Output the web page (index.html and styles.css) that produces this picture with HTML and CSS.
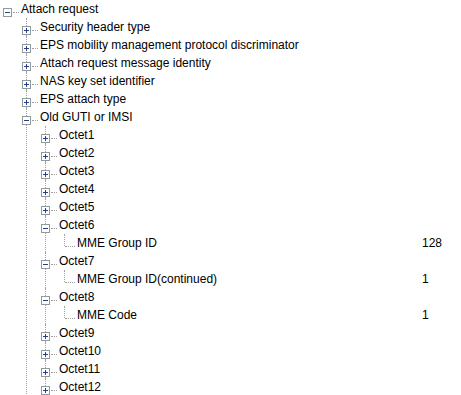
FILE: index.html
```html
<!DOCTYPE html>
<html>
<head>
<meta charset="utf-8">
<link rel="stylesheet" href="styles.css">
</head>
<body>
<ul class="tree">
  <li class="root">
    <div class="row"><span class="tog minus"></span><span class="conn"></span><span class="label">Attach request</span></div>
    <ul>
      <li><div class="row"><span class="tog plus"></span><span class="conn"></span><span class="label">Security header type</span></div></li>
      <li><div class="row"><span class="tog plus"></span><span class="conn"></span><span class="label">EPS mobility management protocol discriminator</span></div></li>
      <li><div class="row"><span class="tog plus"></span><span class="conn"></span><span class="label">Attach request message identity</span></div></li>
      <li><div class="row"><span class="tog plus"></span><span class="conn"></span><span class="label">NAS key set identifier</span></div></li>
      <li><div class="row"><span class="tog plus"></span><span class="conn"></span><span class="label">EPS attach type</span></div></li>
      <li>
        <div class="row"><span class="tog minus"></span><span class="conn"></span><span class="label">Old GUTI or IMSI</span></div>
        <ul>
          <li><div class="row"><span class="tog plus"></span><span class="conn"></span><span class="label">Octet1</span></div></li>
          <li><div class="row"><span class="tog plus"></span><span class="conn"></span><span class="label">Octet2</span></div></li>
          <li><div class="row"><span class="tog plus"></span><span class="conn"></span><span class="label">Octet3</span></div></li>
          <li><div class="row"><span class="tog plus"></span><span class="conn"></span><span class="label">Octet4</span></div></li>
          <li><div class="row"><span class="tog plus"></span><span class="conn"></span><span class="label">Octet5</span></div></li>
          <li>
            <div class="row"><span class="tog minus"></span><span class="conn"></span><span class="label">Octet6</span></div>
            <ul>
              <li class="last"><div class="row"><span class="conn leaf"></span><span class="label">MME Group ID</span><span class="value">128</span></div></li>
            </ul>
          </li>
          <li>
            <div class="row"><span class="tog minus"></span><span class="conn"></span><span class="label">Octet7</span></div>
            <ul>
              <li class="last"><div class="row"><span class="conn leaf"></span><span class="label">MME Group ID(continued)</span><span class="value">1</span></div></li>
            </ul>
          </li>
          <li>
            <div class="row"><span class="tog minus"></span><span class="conn"></span><span class="label">Octet8</span></div>
            <ul>
              <li class="last"><div class="row"><span class="conn leaf"></span><span class="label">MME Code</span><span class="value">1</span></div></li>
            </ul>
          </li>
          <li><div class="row"><span class="tog plus"></span><span class="conn"></span><span class="label">Octet9</span></div></li>
          <li><div class="row"><span class="tog plus"></span><span class="conn"></span><span class="label">Octet10</span></div></li>
          <li><div class="row"><span class="tog plus"></span><span class="conn"></span><span class="label">Octet11</span></div></li>
          <li><div class="row"><span class="tog plus"></span><span class="conn"></span><span class="label">Octet12</span></div></li>
        </ul>
      </li>
    </ul>
  </li>
</ul>
</body>
</html>
```

FILE: styles.css
```css
html, body {
  margin: 0;
  padding: 0;
  background: #ffffff;
  overflow: hidden;
}
body {
  width: 461px;
  height: 395px;
  font-family: "Liberation Sans", Arial, sans-serif;
  font-size: 12px;
  color: #000000;
}
.tree, .tree ul {
  list-style: none;
  margin: 0;
  padding: 0;
}
.tree ul {
  padding-left: 19px;
}
.tree li {
  position: relative;
}
.tree ul > li::before {
  content: "";
  position: absolute;
  left: 7px;
  top: 0;
  bottom: 0;
  border-left: 1px dotted #a0a0a0;
}
.tree ul > li.last::before {
  bottom: auto;
  height: 12px;
}
.row {
  position: relative;
  display: flex;
  align-items: flex-start;
  height: 18px;
  line-height: 18px;
  white-space: nowrap;
}
.tog {
  position: relative;
  z-index: 1;
  box-sizing: border-box;
  width: 9px;
  height: 9px;
  margin-left: 3px;
  margin-top: 8px;
  border: 1px solid #919b9c;
  background: #ffffff;
  flex: none;
}
.tog::before {
  content: "";
  position: absolute;
  left: 1px;
  top: 3px;
  width: 5px;
  height: 1px;
  background: #2a3e8c;
}
.tog.plus::after {
  content: "";
  position: absolute;
  left: 3px;
  top: 1px;
  width: 1px;
  height: 5px;
  background: #2a3e8c;
}
.conn {
  flex: none;
  width: 6px;
  height: 0;
  margin-top: 12px;
  margin-left: 1px;
  border-top: 1px dotted #a0a0a0;
}
.conn.leaf {
  margin-left: 8px;
  width: 10px;
}
.label {
  flex: none;
  margin-left: 2px;
}
.value {
  margin-left: auto;
  width: 39px;
  flex: none;
}
```
